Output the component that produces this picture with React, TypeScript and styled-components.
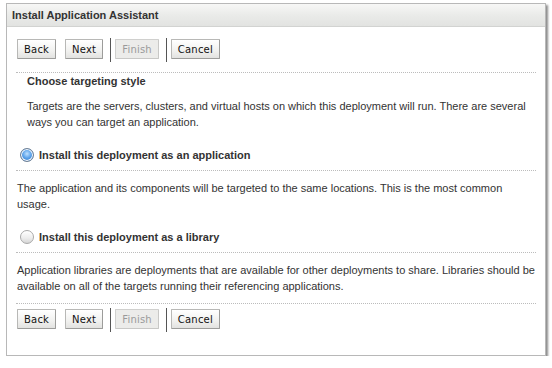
import styled, { createGlobalStyle } from "styled-components";

const GlobalStyle = createGlobalStyle`
  body {
    margin: 0;
    background: #ffffff;
    font-family: "Liberation Sans", Arial, sans-serif;
    color: #333333;
  }
`;

const Panel = styled.div`
  margin: 3px 0 0 6px;
  width: 538px;
  height: 351px;
  border: 1px solid #b8b8b8;
  box-shadow: 2px 2px 2px rgba(0, 0, 0, 0.45);
  background: #ffffff;
  display: flex;
  flex-direction: column;
`;

const Header = styled.div`
  height: 22px;
  padding: 0 5px;
  display: flex;
  align-items: center;
  background: linear-gradient(#f7f7f6, #eaebe9 50%, #e2e3e1);
  border-bottom: 1px solid #d2d3d1;
  font-size: 11px;
  font-weight: bold;
  color: #333333;
`;

const Body = styled.div`
  padding: 0 9px;
  display: flex;
  flex-direction: column;
`;

const ButtonBar = styled.div<{ $top: number }>`
  display: flex;
  align-items: flex-start;
  padding: ${(p) => p.$top}px 0 0 1px;
`;

const Button = styled.button<{ $disabled?: boolean }>`
  height: 20px;
  margin: 1px 9px 0 0;
  padding: 0 6px;
  font-family: "DejaVu Sans", sans-serif;
  font-size: 10px;
  letter-spacing: 0.2px;
  color: ${(p) => (p.$disabled ? "#9a9a9a" : "#111111")};
  background: ${(p) =>
    p.$disabled
      ? "#ececea"
      : "linear-gradient(#ffffff, #f1f1ef 60%, #e2e2e0)"};
  border: 1px solid ${(p) => (p.$disabled ? "#c8c8c6" : "#9c9c9a")};
  border-top-color: ${(p) => (p.$disabled ? "#d0d0ce" : "#b8b8b6")};
  border-left-color: ${(p) => (p.$disabled ? "#d0d0ce" : "#b8b8b6")};
  border-radius: 1px;
`;

const Separator = styled.span`
  width: 1px;
  height: 24px;
  background: #555555;
  margin: 0 4px 0 -2px;
`;

const Dotted = styled.div<{ $top: number }>`
  margin-top: ${(p) => p.$top}px;
  border-top: 1px dotted #bcbcbc;
`;

const Title = styled.div`
  margin: 2px 0 0 11px;
  font-size: 11px;
  font-weight: bold;
  color: #333333;
`;

const Text = styled.p<{ $indent: number; $top: number }>`
  margin: ${(p) => p.$top}px 0 0 ${(p) => p.$indent}px;
  font-size: 11px;
  line-height: 16px;
  color: #333333;
`;

const RadioRow = styled.label<{ $top: number }>`
  margin: ${(p) => p.$top}px 0 0 4px;
  display: flex;
  align-items: center;
  gap: 5px;
  font-size: 11px;
  font-weight: bold;
  color: #333333;
`;

const Radio = styled.span<{ $checked?: boolean }>`
  width: 12px;
  height: 12px;
  border-radius: 50%;
  border: 1px solid ${(p) => (p.$checked ? "#6d7f94" : "#a8a8a8")};
  background: ${(p) =>
    p.$checked
      ? "radial-gradient(circle at 50% 40%, #bfe0ff 0, #5aa2ea 45%, #2f6fc0 100%)"
      : "linear-gradient(#ffffff, #ececec 60%, #d6d6d6)"};
  box-shadow: ${(p) =>
    p.$checked ? "inset 0 0 0 1px #ffffff" : "inset 0 1px 1px #ffffff"};
`;

function Buttons({ top }: { top: number }) {
  return (
    <ButtonBar $top={top}>
      <Button>Back</Button>
      <Button>Next</Button>
      <Separator />
      <Button $disabled>Finish</Button>
      <Separator />
      <Button>Cancel</Button>
    </ButtonBar>
  );
}

export default function App() {
  return (
    <>
      <GlobalStyle />
      <Panel>
        <Header>Install Application Assistant</Header>
        <Body>
          <Buttons top={11} />
          <Dotted $top={10} />
          <Title>Choose targeting style</Title>
          <Text $indent={11} $top={11}>
            Targets are the servers, clusters, and virtual hosts on which this
            deployment will run. There are several ways you can target an
            application.
          </Text>
          <RadioRow $top={18}>
            <Radio $checked />
            Install this deployment as an application
          </RadioRow>
          <Dotted $top={8} />
          <Text $indent={1} $top={9}>
            The application and its components will be targeted to the same
            locations. This is the most common usage.
          </Text>
          <RadioRow $top={18}>
            <Radio />
            Install this deployment as a library
          </RadioRow>
          <Dotted $top={8} />
          <Text $indent={1} $top={9}>
            Application libraries are deployments that are available for other
            deployments to share. Libraries should be available on all of the
            targets running their referencing applications.
          </Text>
          <Dotted $top={9} />
          <Buttons top={4} />
        </Body>
      </Panel>
    </>
  );
}
